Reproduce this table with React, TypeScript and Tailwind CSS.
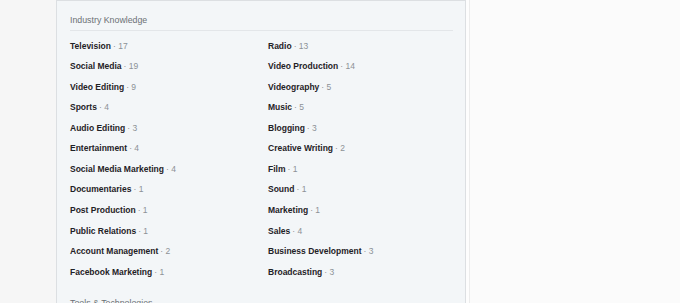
const industry: [string, number][] = [
  ["Television", 17],
  ["Radio", 13],
  ["Social Media", 19],
  ["Video Production", 14],
  ["Video Editing", 9],
  ["Videography", 5],
  ["Sports", 4],
  ["Music", 5],
  ["Audio Editing", 3],
  ["Blogging", 3],
  ["Entertainment", 4],
  ["Creative Writing", 2],
  ["Social Media Marketing", 4],
  ["Film", 1],
  ["Documentaries", 1],
  ["Sound", 1],
  ["Post Production", 1],
  ["Marketing", 1],
  ["Public Relations", 1],
  ["Sales", 4],
  ["Account Management", 2],
  ["Business Development", 3],
  ["Facebook Marketing", 1],
  ["Broadcasting", 3],
];

function Skill({ name, count }: { name: string; count: number }) {
  return (
    <div className="h-[20.55px] flex items-center whitespace-nowrap">
      <span className="font-bold text-[#1f2226]">{name}</span>
      <span className="text-[#8c9196] ml-[2px]">· {count}</span>
    </div>
  );
}

export default function App() {
  return (
    <div
      className="w-[680px] h-[303px] overflow-hidden flex bg-[#f6f6f6] text-[8.5px]"
      style={{ fontFamily: '"Liberation Sans", Arial, sans-serif' }}
    >
      <div className="w-[56px] shrink-0" />
      <div className="w-[410px] shrink-0 bg-[#f3f6f8] border-x border-t border-[#dcdfe2] px-[13px]">
        <div className="pt-[13px] pb-[3px] text-[#6b7075] text-[8.8px] border-b border-[#e3e6e9] mr-[-1px]">
          Industry Knowledge
        </div>
        <div className="grid grid-cols-[198px_1fr] pt-[4.5px]">
          {industry.map(([n, c]) => (
            <Skill key={n} name={n} count={c} />
          ))}
        </div>
        <div className="pt-[15px] text-[#6b7075] text-[8.8px]">Tools &amp; Technologies</div>
      </div>
      <div className="w-[3px] shrink-0 bg-[#fdfdfd]" />
      <div className="flex-1 bg-[#fbfbfb] border-l border-[#ececec]" />
    </div>
  );
}
